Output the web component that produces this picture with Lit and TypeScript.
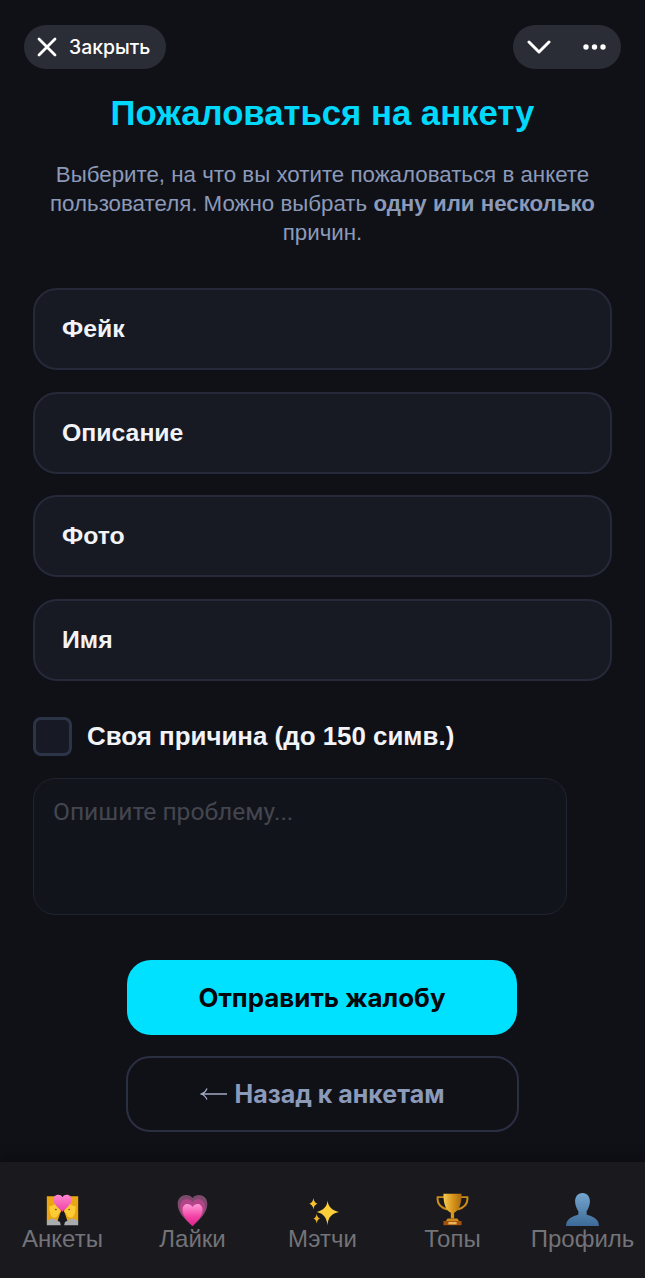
import { LitElement, html, css, svg } from "lit";
import { customElement } from "lit/decorators.js";

const reasons = ["Фейк", "Описание", "Фото", "Имя"];

const couple = svg`
	<defs>
		<linearGradient id="hg" x1="0" y1="0" x2="0" y2="1"><stop offset="0" stop-color="#ff86d2"/><stop offset="1" stop-color="#ee3fa0"/></linearGradient>
	</defs>
	<path d="M1 34V4h9c5 0 8 3 8 8v10l-4 12H1z" fill="#e9a514"/>
	<path d="M39 34V4h-9c-5 0-8 3-8 8v10l4 12h13z" fill="#e9a514"/>
	<path d="M4 16c3 0 6-2 8-4 3 2 5 4 5 7l1 4-2 1c-1 3-3 6-6 6-4 0-6-6-6-14z" fill="#fdcb34"/>
	<path d="M36 16c-3 0-6-2-8-4-3 2-5 4-5 7l-1 4 2 1c1 3 3 6 6 6 4 0 6-6 6-14z" fill="#fdcb34"/>
	<circle cx="12" cy="20" r="1" fill="#5b3a10"/>
	<circle cx="28" cy="20" r="1" fill="#5b3a10"/>
	<path d="M1 39v-5c3-2 6-3 8-3l8 4 1 4H1z" fill="#a9abad"/>
	<path d="M39 39v-5c-3-2-6-3-8-3l-8 4-1 4h17z" fill="#a9abad"/>
	<path d="M20 23C15 18 9 14 9 8c0-6 8-8 11-3 3-5 11-3 11 3 0 6-6 10-11 15z" fill="url(#hg)"/>
`;
const heart = svg`
	<defs>
		<linearGradient id="hb" x1="0" y1="0" x2="0" y2="1"><stop offset="0" stop-color="#ff9ad6"/><stop offset=".6" stop-color="#f23fa3"/><stop offset="1" stop-color="#e0218a"/></linearGradient>
	</defs>
	<path d="M20 40C10 31 2 24 2 13 2 3 14-1 20 6c6-7 18-3 18 7 0 11-8 18-18 27z" fill="#7d4a6c"/>
	<path d="M20 40C12 32 5 26 5 16 5 8 15 4 20 11c5-7 15-3 15 5 0 10-7 16-15 24z" fill="#b34488"/>
	<path d="M20 40C13 33 8 27 8 20c0-7 8-9 12-3 4-6 12-4 12 3 0 7-5 13-12 20z" fill="url(#hb)"/>
`;
const sparkles = svg`
	<path d="M26 9c1 7 5 12 14 14-9 2-13 6-14 16-1-10-5-14-13-16 8-2 13-7 13-14z" fill="#fccf3a"/>
	<path d="M9 6c.5 4 2 6 5 7-3 1-4.500 3-5 7-.5-4-2-6-5-7 3-1 4.500-3 5-7z" fill="#f7c232"/>
	<path d="M13 25c.5 3 1.500 5 4 6-2.500 1-3.500 3-4 6-.5-3-1.500-5-4-6 2.500-1 3.500-3 4-6z" fill="#f0b429"/>
`;
const trophy = svg`
	<defs>
		<linearGradient id="cup" x1="0" y1="0" x2="1" y2="0"><stop offset="0" stop-color="#f6cc52"/><stop offset=".5" stop-color="#d9961c"/><stop offset="1" stop-color="#a96a10"/></linearGradient>
	</defs>
	<path d="M11 5H2c-1 8 4 13 12 15M29 5h9c1 8-4 13-12 15" fill="none" stroke="#c98c18" stroke-width="2.400"/>
	<path d="M9 1h22c0 13-3 20-9 23v7h-4v-7C12 21 9 14 9 1z" fill="url(#cup)"/>
	<path d="M14 31h12l2 3H12z" fill="#d18a1a"/>
	<path d="M9 34h22v5H9z" fill="#a5530c"/>
	<path d="M15 35h10v3H15z" fill="#e8b65a"/>
`;
const person = svg`
	<defs>
		<linearGradient id="pg" x1="0" y1="0" x2="0" y2="1"><stop offset="0" stop-color="#75a6cf"/><stop offset="1" stop-color="#3d6a98"/></linearGradient>
	</defs>
	<path d="M20 0c6 0 9 5 9 10 0 5-2 9-4 12v4c5 2 15 4 15 14H0c0-10 10-12 15-14v-4c-2-3-4-7-4-12C11 5 14 0 20 0z" fill="url(#pg)"/>
`;

const tabs = [
	{ label: "Анкеты", icon: couple },
	{ label: "Лайки", icon: heart },
	{ label: "Мэтчи", icon: sparkles },
	{ label: "Топы", icon: trophy },
	{ label: "Профиль", icon: person },
];

@customElement("app-root")
export class AppRoot extends LitElement {
	static override styles = css`
		:host {
			background: #101117;
			display: flex;
			flex-direction: column;
			font-family: "Liberation Sans", Arial, sans-serif;
			height: 1278px;
			overflow: hidden;
		}

		.top {
			display: flex;
			justify-content: space-between;
			padding: 25px 24px 0;
		}

		.pill {
			align-items: center;
			background: #2b2d36;
			block-size: 44px;
			border-radius: 22px;
			color: #fff;
			display: flex;
		}

		.close {
			font-family: Inter, sans-serif;
			font-size: 19.4px;
			font-weight: 500;
			gap: 12px;
			padding: 0 16px 0 13px;
		}

		.menu {
			gap: 32px;
			padding: 0 15px 0 14px;
		}

		h1 {
			color: #00d9fb;
			font-size: 34.7px;
			font-weight: 700;
			line-height: 40px;
			margin: 24px 0 0;
			text-align: center;
		}

		.intro {
			color: #8c9aba;
			font-size: 22.3px;
			line-height: 29px;
			margin: 27px 40px 0;
			text-align: center;
		}

		.intro b {
			font-weight: 700;
		}

		.reasons {
			display: flex;
			flex-direction: column;
			gap: 21.5px;
			margin: 41px 33px 0;
		}

		.reason {
			align-items: center;
			background: #171a23;
			block-size: 82px;
			border: 2px solid #262939;
			border-radius: 24px;
			box-sizing: border-box;
			color: #f2f3f7;
			display: flex;
			font-size: 24.8px;
			font-weight: 700;
			padding-inline-start: 27px;
		}

		.own {
			align-items: center;
			color: #f2f3f7;
			display: flex;
			font-size: 25.9px;
			font-weight: 700;
			gap: 15px;
			margin: 36.5px 33px 0;
		}

		.box {
			background: #171a24;
			block-size: 39px;
			border: 3px solid #2c3448;
			border-radius: 8px;
			box-sizing: border-box;
			inline-size: 39px;
		}

		.field {
			background: #12141c;
			block-size: 137px;
			border: 1px solid #202330;
			border-radius: 22px;
			box-sizing: border-box;
			color: #44464f;
			font-family: Roboto, sans-serif;
			font-size: 24.6px;
			inline-size: 534px;
			margin: 21.5px 0 0 33px;
			padding: 18px 19px;
		}

		.actions {
			align-items: center;
			display: flex;
			flex-direction: column;
			font-family: Inter, sans-serif;
			font-weight: 700;
			gap: 21px;
			margin-top: 45.5px;
		}

		.send, .back {
			align-items: center;
			border-radius: 24px;
			box-sizing: border-box;
			display: flex;
			justify-content: center;
		}

		.send {
			background: #00e1ff;
			block-size: 75px;
			color: #04070c;
			font-size: 25.9px;
			inline-size: 390px;
			margin-right: 1px;
		}

		.back {
			block-size: 76px;
			border: 2px solid #2b2f42;
			color: #8c9aba;
			font-size: 25px;
			gap: 7px;
			inline-size: 393px;
		}

		.nav {
			background: #1a191e;
			block-size: 116px;
			box-shadow: 0 -8px 10px rgba(0, 0, 0, 0.22);
			display: grid;
			grid-template-columns: repeat(5, 130px);
			justify-content: center;
			margin-top: auto;
		}

		.tab {
			align-items: center;
			color: #737378;
			display: flex;
			flex-direction: column;
			font-size: 24px;
			line-height: 26px;
			padding-top: 31px;
			white-space: nowrap;
		}

		.tab svg {
			block-size: 33px;
			inline-size: 33px;
		}
	`;

	override render() {
		return html`
			<div class="top">
				<div class="pill close">
					<svg width="20" height="20" viewBox="0 0 20 20"><path d="M2 2l16 16M18 2L2 18" stroke="#fff" stroke-width="2.800" stroke-linecap="round"/></svg>
					Закрыть
				</div>
				<div class="pill menu">
					<svg width="24" height="14" viewBox="0 0 24 14"><path d="M2 2l10 10L22 2" fill="none" stroke="#fff" stroke-width="3" stroke-linecap="round" stroke-linejoin="round"/></svg>
					<svg width="23" height="6" viewBox="0 0 23 6"><circle cx="3" cy="3" r="2.700" fill="#fff"/><circle cx="11.500" cy="3" r="2.700" fill="#fff"/><circle cx="20" cy="3" r="2.700" fill="#fff"/></svg>
				</div>
			</div>
			<h1>Пожаловаться на анкету</h1>
			<p class="intro">Выберите, на что вы хотите пожаловаться в анкете пользователя. Можно выбрать <b>одну или несколько</b> причин.</p>
			<div class="reasons">
				${reasons.map((reason) => html`<div class="reason">${reason}</div>`)}
			</div>
			<div class="own"><span class="box"></span>Своя причина (до 150 симв.)</div>
			<div class="field">Опишите проблему...</div>
			<div class="actions">
				<div class="send">Отправить жалобу</div>
				<div class="back">
					<svg width="27" height="14" viewBox="0 0 27 14"><path d="M27 7H1M7 1.500C6 4 4 6 1 7c3 1 5 3 6 5.500" fill="none" stroke="#a2abc4" stroke-width="1.300"/></svg>
					Назад к анкетам
				</div>
			</div>
			<nav class="nav">
				${tabs.map(
					(tab) => html`
						<div class="tab">
							<svg viewBox="0 0 40 40">${tab.icon}</svg>
							${tab.label}
						</div>
					`
				)}
			</nav>
		`;
	}
}
